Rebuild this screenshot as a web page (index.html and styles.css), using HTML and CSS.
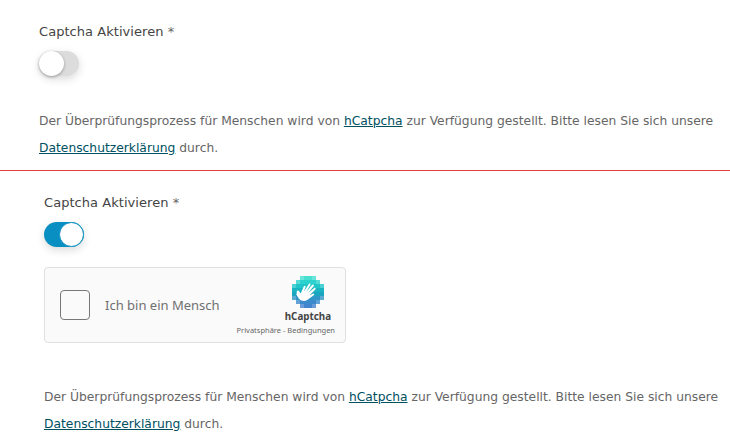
FILE: index.html
```html
<!DOCTYPE html>
<html lang="de">
<head>
<meta charset="utf-8">
<title>Captcha</title>
<link rel="stylesheet" href="styles.css">
</head>
<body>
<section class="block first">
  <div class="label">Captcha Aktivieren <span class="req">*</span></div>
  <div class="toggle off"><span class="knob"></span></div>
  <p class="note">Der Überprüfungsprozess für Menschen wird von <a href="#">hCatpcha</a> zur Verfügung gestellt. Bitte lesen Sie sich unsere <a href="#">Datenschutzerklärung</a> durch.</p>
</section>
<hr class="rule">
<section class="block second">
  <div class="label">Captcha Aktivieren <span class="req">*</span></div>
  <div class="toggle on"><span class="knob"></span></div>
  <div class="widget">
    <div class="check"></div>
    <div class="human">Ich bin ein Mensch</div>
    <div class="brand">
      <svg class="logo" width="32" height="32" viewBox="0 0 32 32" aria-hidden="true">
        <g shape-rendering="crispEdges">
          <rect fill="#46dfd0" x="8" y="0" width="16" height="4"/>
          <rect fill="#2cd2cd" x="4" y="4" width="24" height="4"/>
          <rect fill="#1fc5c8" x="0" y="8" width="32" height="4"/>
          <rect fill="#18b4c2" x="0" y="12" width="32" height="4"/>
          <rect fill="#1ca5c0" x="0" y="16" width="32" height="4"/>
          <rect fill="#2f96c8" x="0" y="20" width="32" height="4"/>
          <rect fill="#3b8bcc" x="4" y="24" width="24" height="4"/>
          <rect fill="#4384cf" x="8" y="28" width="16" height="4"/>
          <g fill="#fff" opacity=".2">
            <rect x="4" y="4" width="4" height="4"/><rect x="24" y="4" width="4" height="4"/>
            <rect x="0" y="8" width="4" height="4"/><rect x="28" y="8" width="4" height="4"/>
            <rect x="0" y="20" width="4" height="4"/><rect x="28" y="20" width="4" height="4"/>
            <rect x="4" y="24" width="4" height="4"/><rect x="24" y="24" width="4" height="4"/>
            <rect x="8" y="0" width="4" height="4"/><rect x="20" y="0" width="4" height="4"/>
            <rect x="8" y="28" width="4" height="4"/><rect x="20" y="28" width="4" height="4"/>
          </g>
        </g>
        <path fill="#fff" transform="translate(-2.400 -2.400) scale(1.150)" d="M6.500 17.500c-.8-1.700-.1-3.100 1-2.700.8.300 1.300 1.200 1.800 2.200l.7-.5 2.300-5.200c.5-1.100 1.800-.7 1.600.4l-1.500 3.800 4.200-6.300c.7-1 2-.4 1.500.7l-3.600 5.800 5.200-5.900c.8-.9 2 .1 1.300 1l-4.700 5.900 5-4.100c1-.8 1.900.3 1.100 1.200l-5.200 5.200 3-1.500c1.100-.5 1.700.7.800 1.300l-5.400 3.900c-2.200 1.600-5.300 1.400-7.200-.6-1.200-1.300-1.700-3-2.900-4.600z"/>
      </svg>
      <div class="wordmark">hCaptcha</div>
      <div class="legal">Privatsphäre - Bedingungen</div>
    </div>
  </div>
  <p class="note">Der Überprüfungsprozess für Menschen wird von <a href="#">hCatpcha</a> zur Verfügung gestellt. Bitte lesen Sie sich unsere <a href="#">Datenschutzerklärung</a> durch.</p>
</section>
</body>
</html>
```

FILE: styles.css
```css
* { box-sizing: border-box; }
html, body { margin: 0; padding: 0; background: #fff; }
body { width: 730px; height: 440px; overflow: hidden; font-family: "DejaVu Sans", sans-serif; color: #666; }
.block.first { padding: 21px 0 0 39px; height: 170px; }
.block.second { padding: 21px 0 0 44px; }
.rule { margin: 0; border: 0; height: 1px; background: #e53e3e; }
.label { font-size: 13px; line-height: 22px; color: #444; letter-spacing: .05px; }
.req { color: #666; }
.toggle { width: 40px; height: 25px; border-radius: 13px; margin-top: 8px; position: relative; box-shadow: 0 3px 8px rgba(0,0,0,.15); }
.toggle.off { background: #dcdcdc; }
.toggle.on { background: #0a8fc2; }
.knob { position: absolute; top: 0; width: 25px; height: 25px; border-radius: 50%; background: #fff; }
.off .knob { left: 0; box-shadow: 0 1px 3px rgba(0,0,0,.35); }
.on .knob { right: 0; border: 1px solid #0a8fc2; }
.note { margin: 0; width: 686px; font-size: 12.3px; line-height: 26.67px; color: #666; }
.first .note { margin-top: 32px; }
.second .note { margin-top: 41px; }
.note a { color: #00505f; text-decoration: underline; }
.widget { margin-top: 20px; width: 302px; height: 76px; background: #fafafa; border: 1px solid #e0e0e0; border-radius: 4px; display: flex; align-items: center; padding-left: 15px; padding-right: 10px; }
.check { width: 30px; height: 30px; background: #fafafa; border: 1px solid #777; border-radius: 4px; }
.human { margin-left: 15px; font-family: "Noto Sans", sans-serif; font-size: 13px; color: #707070; }
.brand { margin-left: auto; display: flex; flex-direction: column; align-items: flex-end; padding-top: 1px; }
.logo { display: block; margin-right: 11px; }
.wordmark { font-family: "Noto Sans", sans-serif; font-size: 9.8px; line-height: 13px; font-weight: 700; color: #444; margin: 2px 4px 0 0; }
.legal { font-family: "Noto Sans", sans-serif; font-size: 7.5px; line-height: 12px; color: #666; margin-top: 1px; white-space: nowrap; }
```
